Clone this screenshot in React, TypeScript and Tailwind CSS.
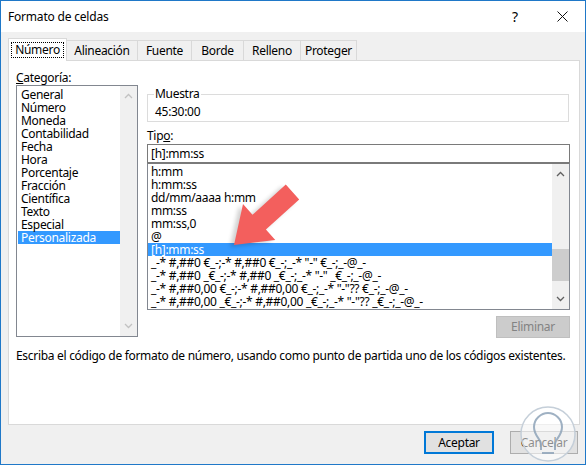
import React from 'react';

const catItems = ['General','Número','Moneda','Contabilidad','Fecha','Hora','Porcentaje','Fracción','Científica','Texto','Especial','Personalizada'];
const typeItems = [
  'h:mm',
  'h:mm:ss',
  'dd/mm/aaaa h:mm',
  'mm:ss',
  'mm:ss,0',
  '@',
  '[h]:mm:ss',
  '_-* #,##0 €_-;-* #,##0 €_-;_-* "-" €_-;_-@_-',
  '_-* #,##0 _€_-;-* #,##0 _€_-;_-* "-" _€_-;_-@_-',
  '_-* #,##0,00 €_-;-* #,##0,00 €_-;_-* "-"?? €_-;_-@_-',
  '_-* #,##0,00 _€_-;-* #,##0,00 _€_-;_-* "-"?? _€_-;_-@_-',
];

function Chevron({ up, color }: { up: boolean; color: string }) {
  return (
    <svg width="9" height="6" viewBox="0 0 9 6">
      {up ? (
        <path d="M1 5 L4.5 1.5 L8 5" fill="none" stroke={color} strokeWidth="1.3" />
      ) : (
        <path d="M1 1 L4.5 4.5 L8 1" fill="none" stroke={color} strokeWidth="1.3" />
      )}
    </svg>
  );
}

export default function App() {
  return (
    <div className="relative w-[586px] h-[465px] border border-[#1f78c8] bg-[#f0f0f0] flex flex-col font-['Noto_Sans',sans-serif] text-[12px] tracking-[-0.3px] text-black overflow-hidden">
      {/* Title bar */}
      <div className="h-[31px] bg-white flex items-center pl-[7px] shrink-0">
        <span className="text-[12px] tracking-[-0.2px]">Formato de celdas</span>
        <span className="ml-auto text-[14px] w-[14px] text-center mr-[35px] leading-none">?</span>
        <svg width="11" height="11" viewBox="0 0 11 11" className="mr-[17px]">
          <path d="M0.5 0.5 L10.5 10.5 M10.5 0.5 L0.5 10.5" stroke="#111" strokeWidth="1" />
        </svg>
      </div>

      {/* Tabs */}
      <div className="flex items-end h-[22px] mt-[6px] pl-[7px] shrink-0">
        <div className="relative z-10 -mb-px h-[23px] w-[59px] bg-white border-t border-l border-r border-[#d9d9d9] flex items-center justify-center">
          <span className="border border-dotted border-black px-[3px] leading-[14px]">Número</span>
        </div>
        <div className="h-[20px] w-[72px] border border-b-0 border-[#d9d9d9] flex items-center justify-center -ml-px">Alineación</div>
        <div className="h-[20px] w-[55px] border border-b-0 border-[#d9d9d9] flex items-center justify-center -ml-px">Fuente</div>
        <div className="h-[20px] w-[53px] border border-b-0 border-[#d9d9d9] flex items-center justify-center -ml-px">Borde</div>
        <div className="h-[20px] w-[58px] border border-b-0 border-[#d9d9d9] flex items-center justify-center -ml-px">Relleno</div>
        <div className="h-[20px] w-[57px] border border-b-0 border-[#d9d9d9] flex items-center justify-center -ml-px">Proteger</div>
      </div>

      {/* Panel */}
      <div className="ml-[7px] mr-[5px] h-[365px] bg-white border border-[#d9d9d9] shrink-0 flex flex-col">
        <div className="flex pl-[7px]">
          {/* Left column */}
          <div className="w-[122px] mt-[9px] flex flex-col">
            <div className="h-[15px] leading-[15px]"><span className="underline">C</span>ategoría:</div>
            <div className="h-[252px] border border-[#828790] flex">
              <div className="flex-1 pt-[2px] pl-[1px]">
                {catItems.map((c) => (
                  <div
                    key={c}
                    className={
                      c === 'Personalizada'
                        ? 'h-[13px] leading-[13px] pl-[3px] bg-[#3399ff] text-white'
                        : 'h-[13px] leading-[13px] pl-[3px]'
                    }
                  >
                    {c}
                  </div>
                ))}
              </div>
              <div className="w-[17px] bg-[#f0f0f0] flex flex-col items-center justify-between py-[7px]">
                <Chevron up color="#c2c2c2" />
                <Chevron up={false} color="#c2c2c2" />
              </div>
            </div>
          </div>

          {/* Right column */}
          <div className="ml-[9px] w-[423px] flex flex-col">
            <fieldset className="mt-[26px] border border-[#dcdcdc] px-[6px] pb-[2px] mr-[1px]">
              <legend className="px-[1px] leading-[14px]">Muestra</legend>
              <div className="h-[14px] leading-[14px] mt-[4px] pl-[1px]">45:30:00</div>
            </fieldset>
            <div className="mt-[7px] h-[14px] leading-[14px]">Tip<span className="underline">o</span>:</div>
            <div className="mt-[1px] h-[19px] border border-[#7a7a7a] leading-[17px] pl-[3px]">[h]:mm:ss</div>
            <div className="h-[147px] border border-[#828790] border-t-[#7a7a7a] flex overflow-hidden">
              <div className="flex-1 pt-[1px] min-w-0">
                {typeItems.map((t, i) => (
                  <div
                    key={i}
                    className={
                      i === 6
                        ? 'h-[13px] leading-[13px] pl-[3px] whitespace-pre bg-[#3399ff] text-white'
                        : 'h-[13px] leading-[13px] pl-[3px] whitespace-pre'
                    }
                  >
                    {t}
                  </div>
                ))}
              </div>
              <div className="w-[17px] bg-[#f0f0f0] flex flex-col items-center">
                <div className="mt-[7px]"><Chevron up color="#606060" /></div>
                <div className="mt-[72px] w-[17px] h-[32px] bg-[#cdcdcd]" />
                <div className="mt-auto mb-[7px]"><Chevron up={false} color="#606060" /></div>
              </div>
            </div>
            <div className="mt-[6px] self-end w-[74px] h-[22px] bg-[#cccccc] border border-[#bfbfbf] text-[#838383] flex items-center justify-center">
              Eliminar
            </div>
          </div>
        </div>
        <div className="mt-[11px] pl-[7px] h-[14px] leading-[14px] whitespace-nowrap">
          Escriba el código de formato de número, usando como punto de partida uno de los códigos existentes.
        </div>
      </div>

      {/* Buttons */}
      <div className="flex justify-end gap-[16px] mt-[6px] mr-[7px]">
        <div className="w-[70px] h-[23px] bg-[#e1e1e1] border border-[#0078d7] shadow-[inset_0_0_0_1px_#0078d7] flex items-center justify-center">Aceptar</div>
        <div className="w-[68px] h-[23px] bg-[#e1e1e1] border border-[#adadad] flex items-center justify-center">Cancelar</div>
      </div>

      {/* Red arrow overlay */}
      <svg className="absolute left-0 top-0 pointer-events-none" width="586" height="465" viewBox="0 0 586 465">
        <defs>
          <filter id="sh" x="-20%" y="-20%" width="140%" height="140%">
            <feGaussianBlur stdDeviation="2" />
          </filter>
        </defs>
        <polygon
          points="231,243 240,202 249.5,212.8 282.8,182.6 296.2,197.4 262.9,227.6 272.3,238"
          fill="#000"
          opacity="0.18"
          filter="url(#sh)"
          transform="translate(-2,3)"
        />
        <polygon
          points="233,244 242,203 251.5,213.8 284.8,183.6 298.2,198.4 264.9,228.6 274.3,239"
          fill="#f35f5d"
        />
      </svg>

      {/* Watermark */}
      <svg className="absolute left-0 top-0 pointer-events-none" width="586" height="465" viewBox="0 0 586 465">
        <circle cx="547" cy="433" r="27" fill="#ffffff" fillOpacity="0.55" stroke="#c5cfd9" strokeWidth="1.5" />
        <path
          d="M540 449 L540 443 C540 438 533 435 533 426 C533 418 540 412 547 412 C554 412 561 418 561 426 C561 435 554 438 554 443 L554 449 M541 452 L553 452"
          fill="none"
          stroke="#8ea3b8"
          strokeWidth="2"
          strokeOpacity="0.85"
        />
      </svg>
    </div>
  );
}
